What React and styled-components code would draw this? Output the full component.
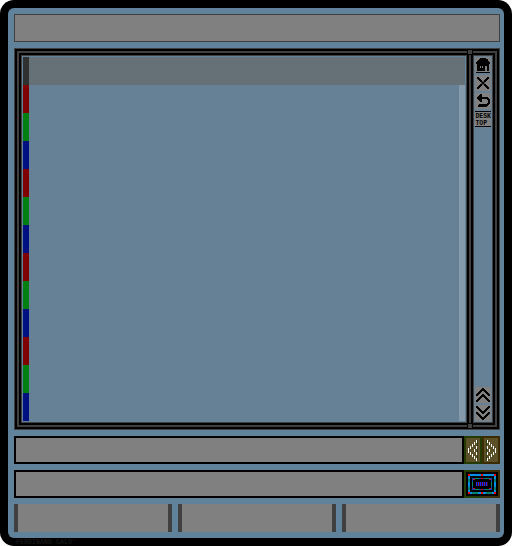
import React from 'react';
import styled, { createGlobalStyle } from 'styled-components';

const Global = createGlobalStyle`
  * { box-sizing: border-box; }
  body { margin: 0; background: #fff; }
`;
const Device = styled.main`
  width: 512px; height: 546px; padding: 8px 8px 0; background: #000; border-radius: 14px;
`;
const Face = styled.div`
  height: 530px; padding: 6px 4px 6px 6px; border-radius: 6px; background: #60829b;
  display: flex; flex-direction: column; gap: 6px;
`;
const TitleBar = styled.header`
  height: 28px; background: #808080; border: 1px solid #404040;
`;
const Frame = styled.section`
  position: relative; height: 382px; display: flex; border: 1px solid #404040; background: #000; padding: 2px;
`;
const Rail = styled.div`
  flex: 1; display: flex; border: 2px solid #404040; background: #000; padding: 2px;
`;
const Main = styled.div`
  width: 446px; padding: 1px; display: flex; border: 1px solid #404040; background: #60829b;
`;
const Stripes = styled.div` width: 6px; display: flex; flex-direction: column; `;
const Stripe = styled.i` height: 28px; background: ${p => p.$color}; `;
const Content = styled.div` flex: 1; background: #668196; `;
const Heading = styled.div` height: 28px; background: #667077; `;
const Track = styled.div` height: 336px; width: 6px; margin-left: auto; background: #8499aa; `;
const Divider = styled.div`
  width: 6px; margin: -2px 0; border: solid #000; border-width: 0 2px; background: #404040;
`;
const Joint = styled.i`
  position: absolute; left: 452px; ${p => p.$side}: 0; width: 6px; height: 6px;
  background: #404040; border: 1px solid #000;
`;
const Tools = styled.nav`
  flex: 1; display: flex; flex-direction: column; gap: 2px; align-items: center; padding: 1px 0;
  background: #668196; border: 1px solid #404040;
`;
const Tool = styled.span`
  width: 16px; height: 16px; background: #808080; flex: none; display: block;
  margin-top: ${p => p.$push ? 'auto' : 0};
  svg { display: block; }
`;
const Label = styled.span`
  display: flex; flex-direction: column; width: 16px; height: 16px; background: #808080;
  border: solid #000; border-width: 1px 0; font: bold 6.5px/7px "Liberation Mono", monospace;
  letter-spacing: -.05px; white-space: nowrap; padding: 1px 0 0 .5px;
`;
const Row = styled.div` display: flex; height: 28px; `;
const Field = styled.div` width: 450px; border: 2px solid #000; background: #808080; `;
const Arrow = styled.span`
  width: 18px; border: 2px solid ${p => p.$edge}; background: #5c5028;
  svg { display: block; margin: -2px; }
`;
const Keys = styled.span`
  width: 36px; background: linear-gradient(90deg, #233b00 50%, #3b2b00 50%);
  svg { display: block; }
`;
const Choices = styled.footer` display: grid; grid-template-columns: repeat(3, 158px); gap: 6px; `;
const Choice = styled.div` height: 28px; border: solid #404040; border-width: 0 4px; background: #808080; `;
const Credit = styled.div`
  height: 8px; padding-left: 8px; color: #161616; font: bold 6.5px/9px "Liberation Mono", monospace;
  letter-spacing: .1px; white-space: nowrap;
`;

const bitmaps = {
  home: [
    '................', '.....######.....', '....#########...', '...##########...', '..############..', '.##############.', '.##############.',
    '..############..', '..############..', '..###.#.##..##..', '..###.#.##..##..', '..########..##..', '..########..##..', '..########..##..', '................', '.##############.'],
  close: [
    '................', '................', '..##........##..', '..###......###..', '...###....###...', '....###..###....', '.....##++##.....', '......+##+......',
    '......+##+......', '.....##++##.....', '....###..###....', '...###....###...', '..###......###..', '..##........##..', '................', '................'],
  back: [
    '................', '.....##.........', '....###.........', '...####.........', '..###########...', '..############..', '...####.....###.', '....###......##.',
    '.....##......##.', '.............##.', '............###.', '....##########..', '...##########...', '...#########....', '................', '................'],
  up: [
    '................', '.......##.......', '......####......', '.....######.....', '....###..###....', '...###....###...', '..###......###..', '.###...##...###.',
    '.##...####...##.', '.....######.....', '....###..###....', '...###....###...', '..###......###..', '.###........###.', '.##..........##.', '................'],
};
bitmaps.down = [...bitmaps.up].reverse();

const Pixels = ({ name }) => (
  <svg width="16" height="16" shapeRendering="crispEdges">
    {bitmaps[name].map((row, y) => [...row].map((c, x) => c !== '.' &&
      <rect key={`${x}-${y}`} x={x} y={y} width="1" height="1" fill={c === '+' ? '#404040' : '#000'} />))}
  </svg>
);

const dashes = [[12, 5], [10, 7], [8, 9], [6, 11], [4, 13], [4, 15], [6, 17], [8, 19], [10, 21], [12, 23], [10, 14], [12, 11], [12, 17]];
const Triangle = ({ flip }) => (
  <svg width="18" height="28" shapeRendering="crispEdges">
    <path d={flip ? 'M4.5 4V10M4.5 12V17M4.5 19V24' : 'M13.5 4V10M13.5 12V17M13.5 19V24'} stroke="#303c10" />
    {dashes.map(([x, y]) => <rect key={`${x}-${y}`} x={flip ? 17 - x : x} y={y - 1} width="1" height="3" fill="#fff" />)}
  </svg>
);
const Keyboard = () => (
  <svg width="36" height="28" shapeRendering="crispEdges" fill="none">
    <rect x="2" y="2" width="32" height="24" fill="#000" />
    <path d="M4 5H32M5 4V24M31 4V24M4 23H32" stroke="#0090e8" strokeWidth="2" />
    <path d="M5 9V12M31 9V12M5 17V20M31 17V20M8 23H14M22 23H28" stroke="#00806c" strokeWidth="2" />
    <path d="M4 5H6M17 5H19M30 5H32M4 23H6M17 23H19M30 23H32" stroke="#f00000" strokeWidth="2" />
    <rect x="8.5" y="8.5" width="19" height="11" stroke="#0048b0" />
    <path d="M11 8.5H15M21 8.5H25M11 19.5H15M21 19.5H25M8.5 12V16M27.5 12V16" stroke="#009060" />
    <path d="M9 9.5H11M17 8.5H19M25 9.5H27M9 18.5H11M17 19.5H19M25 18.5H27" stroke="#d00020" />
    <path d="M12.5 12V16M14.5 12V16M16.5 12V16M18.5 12V16M20.5 12V16M22.5 12V16" stroke="#1030ff" />
    <path d="M13.5 12V16M15.5 12V16M17.5 12V16M19.5 12V16M21.5 12V16M23.5 12V16" stroke="#580020" />
  </svg>
);
const colors = ['#303030', ...Array.from({ length: 12 }, (_, i) => ['#800000', '#008010', '#001080'][i % 3])];

export default function App() {
  return <><Global /><Device>
    <Face>
      <TitleBar />
      <Frame>
        <Rail>
          <Main>
            <Stripes>{colors.map((c, i) => <Stripe key={i} $color={c} />)}</Stripes>
            <Content><Heading /><Track /></Content>
          </Main>
          <Divider />
          <Tools>
            <Tool><Pixels name="home" /></Tool>
            <Tool><Pixels name="close" /></Tool>
            <Tool><Pixels name="back" /></Tool>
            <Label><span>DESK</span><span>TOP</span></Label>
            <Tool $push><Pixels name="up" /></Tool>
            <Tool><Pixels name="down" /></Tool>
          </Tools>
        </Rail>
        <Joint $side="top" /><Joint $side="bottom" />
      </Frame>
      <Row><Field /><Arrow $edge="#233b00"><Triangle /></Arrow><Arrow $edge="#3b2b00"><Triangle flip /></Arrow></Row>
      <Row><Field /><Keys><Keyboard /></Keys></Row>
      <Choices><Choice /><Choice /><Choice /></Choices>
    </Face>
    <Credit>FERDINAND CALO'</Credit>
  </Device></>;
}
